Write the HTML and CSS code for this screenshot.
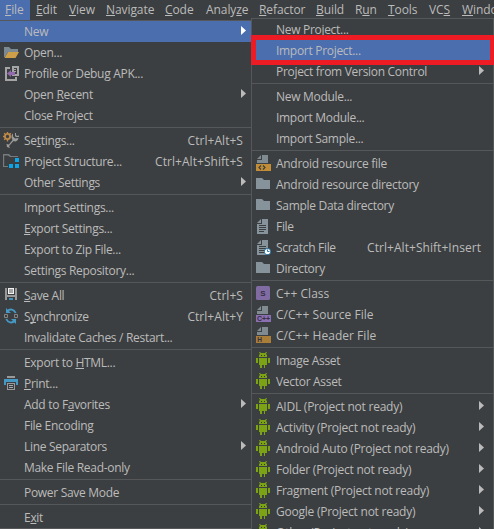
FILE: index.html
```
<!DOCTYPE html>
<html lang="en">
<head>
<meta charset="utf-8">
<title>File menu</title>
<link rel="stylesheet" href="styles.css">
</head>
<body>
<svg class="sprite" width="0" height="0" aria-hidden="true">
  <symbol id="open" viewBox="0 0 16 16"><path fill="#7b8a92" d="M1 3h5l2 2h7v3H5l-3 5H1z"/><path fill="#cf9e48" d="M5 8h11l-3.500 6H1.500z"/></symbol>
  <symbol id="apk" viewBox="0 0 16 16"><path fill="#a5a5a5" d="M2 2h5v2H4v10h8v-2h2v4H2zM9 1h7v10H9V9h5V3h-3v4H9zM10 4h3v1h-3zM10 6h3v1h-3z"/><path fill="#9269ad" d="M4 8.500 8 5v2h4v3H8v2z"/></symbol>
  <symbol id="settings" viewBox="0 0 16 16"><circle cx="4.500" cy="4.500" r="2.600" fill="none" stroke="#bd8848" stroke-width="1.900"/><path stroke="#bd8848" stroke-width="1.400" d="M4.500 0v1.500M4.500 7.500v2M0 4.500h1.500M1.200 1.200l1 1M7.800 1.200l-1 1M1.200 7.800l1-1"/><path fill="#9b9b9b" d="M10 1.500v3l2 2 3.500-.5C15 9 12.500 10 10.500 9L6 14l1 2-3-1-.5-3 2.500.5L9.500 8C8 5 8 3 10 1.500zM13 1v2l1 1 2-.5V5h-3l-1-1V1z"/></symbol>
  <symbol id="structure" viewBox="0 0 16 16"><path fill="#767b7d" d="M0 1h6l2 2h7v1H7L5 2.500H1.200V13H5v1H0z"/><path fill="#0ea5e6" d="M12 5h4v4h-4zM6 11h4v4H6zM12 11h4v4h-4z"/></symbol>
  <symbol id="save" viewBox="0 0 16 16"><path fill="#999" d="M2 1h2v7h8V1h2v12h-2v-3H4v3H2z"/><path fill="#f2f2f2" d="M5 1h6v6H5z"/><path fill="#555" d="M6 2.500h4v1H6zM6 4.500h4v1H6z"/><path fill="#4092bd" d="M6 11h4v2H6z"/></symbol>
  <symbol id="sync" viewBox="0 0 16 16"><path fill="none" stroke="#4698c5" stroke-width="1.900" d="M4 3.200C7 .5 11 1 12.700 5M12 12.800C9 15.500 5 15 3.300 11"/><path fill="#4698c5" d="M3 0v5h5zM13 16v-5H8z"/><path fill="none" stroke="#858585" d="M1.500 6.500h3v3h-3zM11.500 6.500h3v3h-3z"/></symbol>
  <symbol id="print" viewBox="0 0 16 16"><path fill="#999" d="M4 1h8v2H4z"/><path fill="#4698c5" d="M1 4h14v6h-2V7H3v3H1z"/><path fill="#999" d="M4 8h8v7H4z"/><path fill="#3c3f41" d="M5 9h6v5H5z"/><path fill="#aaa" d="M6 10h4v1H6zM6 12h4v1H6z"/></symbol>
  <symbol id="folder" viewBox="0 0 16 16"><path fill="#87939a" d="M1 2h6l2 2h6v9H1z"/></symbol>
  <symbol id="file" viewBox="0 0 16 16"><path fill="#87939a" d="M7 1h6v15H2V6h5zM6 1v4H2z"/><path fill="#3c3f41" d="M4 7h7v1H4zM4 9h7v1H4zM4 11h7v1H4zM4 13h5v1H4z"/></symbol>
  <symbol id="scratch" viewBox="0 0 16 16"><use href="#file"/><circle cx="12.500" cy="12.500" r="3.500" fill="#347ba4"/><circle cx="12.500" cy="12.500" r="2.600" fill="#fff"/><path fill="none" stroke="#347ba4" d="M12.500 10.500v2h2"/></symbol>
  <symbol id="page" viewBox="0 0 16 16"><path fill="#7f8b91" d="M7 0h6v8H2V5h5zM6 0v4H2z"/></symbol>
  <symbol id="res" viewBox="0 0 16 16"><use href="#page"/><path fill="#c18d36" d="M1 9h15v7H1z"/><path fill="none" stroke="#3c3f41" stroke-width="1.200" d="M6 10.500l-2 2 2 2M8 10.500l2 2-2 2"/></symbol>
  <symbol id="android" viewBox="0 0 16 16"><path fill="#7ba313" d="M4 0h1l1 1h4l1-1h1l-1 2 1 1v2H4V3l1-1zM4 6h8v7h-2v3H9v-3H7v3H5v-3H4zM1 6h2v5H1zM13 6h2v5h-2z"/><path fill="#2e3924" d="M6 3h1v1H6zM9 3h1v1H9z"/></symbol>
  <symbol id="arrow" viewBox="0 0 5 9"><path d="M0 0l5 4.500L0 9z"/></symbol>
</svg>

<div class="window">
  <nav class="menubar">
    <span class="active"><u>F</u>ile</span><span><u>E</u>dit</span><span><u>V</u>iew</span><span><u>N</u>avigate</span><span><u>C</u>ode</span><span>Analy<u>z</u>e</span><span><u>R</u>efactor</span><span><u>B</u>uild</span><span>R<u>u</u>n</span><span><u>T</u>ools</span><span>VC<u>S</u></span><span><u>W</u>indow</span>
  </nav>
  <div class="menus">
    <div class="menu file-menu">
      <div class="item selected"><i></i><span>New</span><svg class="arrow"><use href="#arrow"/></svg></div>
      <div class="item"><svg class="icon"><use href="#open"/></svg><span>Open...</span></div>
      <div class="item"><svg class="icon"><use href="#apk"/></svg><span>Profile or Debug APK...</span></div>
      <div class="item"><i></i><span>Open <u>R</u>ecent</span><svg class="arrow"><use href="#arrow"/></svg></div>
      <div class="item"><i></i><span>Close Project</span></div>
      <hr>
      <div class="item"><svg class="icon"><use href="#settings"/></svg><span>Se<u>t</u>tings...</span><kbd>Ctrl+Alt+S</kbd></div>
      <div class="item"><svg class="icon"><use href="#structure"/></svg><span>Project Structure...</span><kbd>Ctrl+Alt+Shift+S</kbd></div>
      <div class="item"><i></i><span>Other Settings</span><svg class="arrow"><use href="#arrow"/></svg></div>
      <hr>
      <div class="item"><i></i><span>Import Settings...</span></div>
      <div class="item"><i></i><span><u>E</u>xport Settings...</span></div>
      <div class="item"><i></i><span>Export to Zip File...</span></div>
      <div class="item"><i></i><span>Settings Repository...</span></div>
      <hr>
      <div class="item"><svg class="icon"><use href="#save"/></svg><span><u>S</u>ave All</span><kbd>Ctrl+S</kbd></div>
      <div class="item"><svg class="icon"><use href="#sync"/></svg><span>S<u>y</u>nchronize</span><kbd>Ctrl+Alt+Y</kbd></div>
      <div class="item"><i></i><span>Invalidate Caches / Restart...</span></div>
      <hr>
      <div class="item"><i></i><span>Export to <u>H</u>TML...</span></div>
      <div class="item"><svg class="icon"><use href="#print"/></svg><span><u>P</u>rint...</span></div>
      <div class="item"><i></i><span>Add to F<u>a</u>vorites</span><svg class="arrow"><use href="#arrow"/></svg></div>
      <div class="item"><i></i><span>File Encoding</span></div>
      <div class="item"><i></i><span>Line Separators</span><svg class="arrow"><use href="#arrow"/></svg></div>
      <div class="item"><i></i><span>Make File Read-only</span></div>
      <hr>
      <div class="item"><i></i><span>Power Save Mode</span></div>
      <hr>
      <div class="item"><i></i><span>E<u>x</u>it</span></div>
    </div>
    <div class="menu new-menu">
      <div class="item"><i></i><span>New Project...</span></div>
      <div class="item selected marked"><i></i><span>Import Project...</span></div>
      <div class="item"><i></i><span>Project from Version Control</span><svg class="arrow"><use href="#arrow"/></svg></div>
      <hr>
      <div class="item"><i></i><span>New Module...</span></div>
      <div class="item"><i></i><span>Import Module...</span></div>
      <div class="item"><i></i><span>Import Sample...</span></div>
      <hr>
      <div class="item"><svg class="icon"><use href="#res"/></svg><span>Android resource file</span></div>
      <div class="item"><svg class="icon"><use href="#folder"/></svg><span>Android resource directory</span></div>
      <div class="item"><svg class="icon"><use href="#folder"/></svg><span>Sample Data directory</span></div>
      <div class="item"><svg class="icon"><use href="#file"/></svg><span>File</span></div>
      <div class="item"><svg class="icon"><use href="#scratch"/></svg><span>Scratch File</span><kbd>Ctrl+Alt+Shift+Insert</kbd></div>
      <div class="item"><svg class="icon"><use href="#folder"/></svg><span>Directory</span></div>
      <hr>
      <div class="item native"><svg class="icon" viewBox="0 0 16 16"><rect x="1" y="1" width="14" height="14" rx="1.500" fill="#806ba2"/><text x="8" y="11" text-anchor="middle" class="glyph" font-size="8">S</text></svg><span>C++ Class</span></div>
      <div class="item native"><svg class="icon" viewBox="0 0 16 16"><use href="#page"/><path fill="#8a70b0" d="M1 9h15v7H1z"/><text x="2" y="15.200" class="glyph" font-size="7" textLength="13">C++</text></svg><span>C/C++ Source File</span></div>
      <div class="item native"><svg class="icon" viewBox="0 0 16 16"><use href="#page"/><path fill="#aa7d38" d="M1 9h15v7H1z"/><text x="2.300" y="15" class="glyph" font-size="6.500">H</text></svg><span>C/C++ Header File</span></div>
      <hr>
      <div class="item"><svg class="icon"><use href="#android"/></svg><span>Image Asset</span></div>
      <div class="item"><svg class="icon"><use href="#android"/></svg><span>Vector Asset</span></div>
      <hr>
      <div class="item template"><svg class="icon"><use href="#android"/></svg><span>AIDL (Project not ready)</span><svg class="arrow"><use href="#arrow"/></svg></div>
      <div class="item template"><svg class="icon"><use href="#android"/></svg><span>Activity (Project not ready)</span><svg class="arrow"><use href="#arrow"/></svg></div>
      <div class="item template"><svg class="icon"><use href="#android"/></svg><span>Android Auto (Project not ready)</span><svg class="arrow"><use href="#arrow"/></svg></div>
      <div class="item template"><svg class="icon"><use href="#android"/></svg><span>Folder (Project not ready)</span><svg class="arrow"><use href="#arrow"/></svg></div>
      <div class="item template"><svg class="icon"><use href="#android"/></svg><span>Fragment (Project not ready)</span><svg class="arrow"><use href="#arrow"/></svg></div>
      <div class="item template"><svg class="icon"><use href="#android"/></svg><span>Google (Project not ready)</span><svg class="arrow"><use href="#arrow"/></svg></div>
      <div class="item template"><svg class="icon"><use href="#android"/></svg><span>Other (Project not ready)</span><svg class="arrow"><use href="#arrow"/></svg></div>
    </div>
  </div>
</div>
</body>
</html>
```
FILE: styles.css
```
* { box-sizing: border-box; }
body {
  margin: 0;
  background: #3c3f41;
  color: #bbb;
  font: 12px/20px "Open Sans", "Noto Sans", sans-serif;
  letter-spacing: -0.3px;
}
.sprite { display: block; }
.window { height: 529px; overflow: hidden; }
.menubar {
  display: grid;
  grid-template-columns: 30px 33px 37px 59px 41px 53px 57px 39px 33px 41px 33px 60px;
  height: 20px;
  letter-spacing: -0.08px;
  white-space: nowrap;
}
.menubar span { padding-left: 6px; }
.menubar .active { background: #4b6eaf; padding-left: 5px; }
u { text-decoration: underline; text-decoration-thickness: 1px; text-underline-offset: 1px; text-decoration-skip-ink: none; }
.menus { display: grid; grid-template-columns: 251px 243px; align-items: start; }
.menu { border-top: 1px solid #555759; line-height: 22px; }
.file-menu { border-bottom: 1px solid #555759; }
.new-menu {
  margin-top: -2px;
  background: #3c3f41;
  border-left: 1px solid #555759;
  border-right: 1px solid #555759;
}
.item { display: flex; align-items: flex-start; height: 21px; padding: 0 8px 0 3px; white-space: nowrap; }
.new-menu .item { padding-right: 12px; }
.item i, .icon { flex: none; width: 16px; height: 16px; margin: 2px 5px 0 0; }
.item kbd { margin-left: auto; font: inherit; letter-spacing: 0.05px; }
.native { letter-spacing: 0.03px; }
.template { letter-spacing: -0.24px; }
.arrow { flex: none; width: 5px; height: 9px; margin: 5px -3px 0 auto; fill: #bbb; }
.selected { background: #4b6eaf; }
.selected .arrow { fill: #fff; }
.marked { position: relative; }
.marked::after {
  content: "";
  position: absolute;
  inset: -5px -2px -4px -1px;
  border: 5px solid #ed1c24;
}
hr { height: 1px; margin: 1px 0 2px; border: 0; background: #555759; }
.glyph { font-family: "Liberation Sans", sans-serif; font-weight: bold; fill: #352f43; letter-spacing: 0; }
```
